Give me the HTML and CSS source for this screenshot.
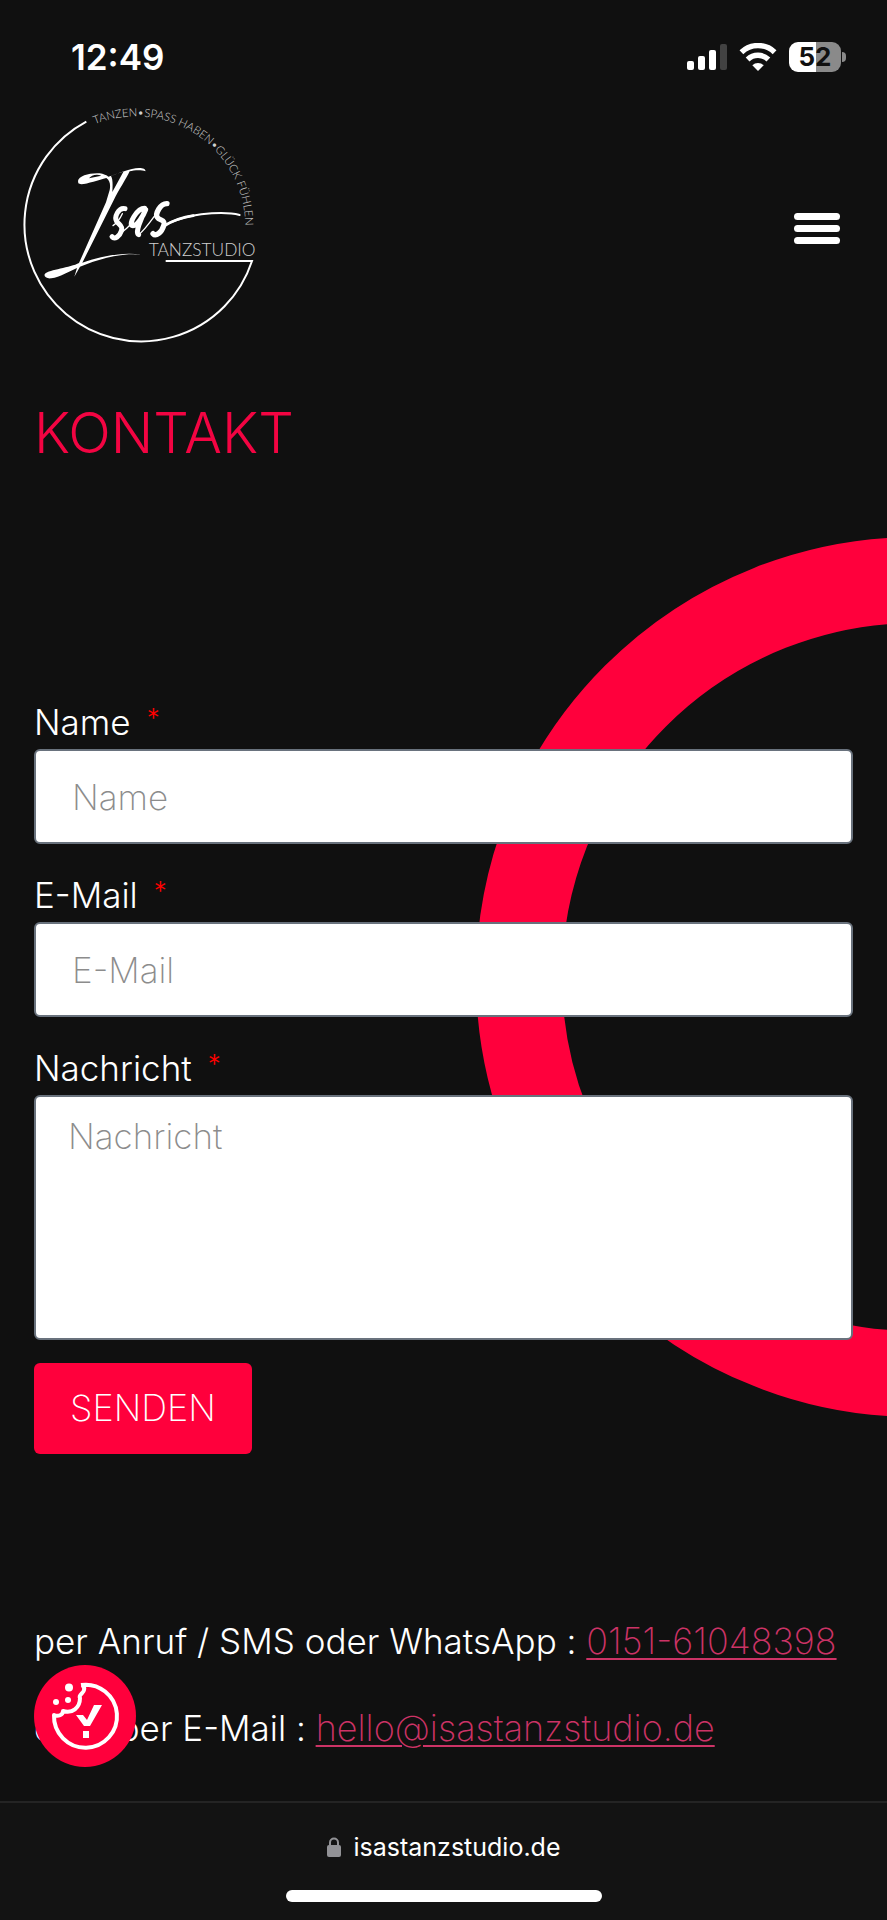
FILE: index.html
```html
<!DOCTYPE html>
<html lang="de">
<head>
<meta charset="utf-8">
<meta name="viewport" content="width=device-width, initial-scale=1">
<title>Kontakt – Isas Tanzstudio</title>
<link rel="stylesheet" href="styles.css">
</head>
<body>
<div class="status-bar">
  <span class="clock">12:49</span>
  <div class="status-icons">
    <svg width="40" height="28" viewBox="0 0 40 28" fill="#fff" aria-hidden="true">
      <rect x="0" y="18" width="7" height="9" rx="2"/>
      <rect x="11" y="13" width="7" height="14" rx="2"/>
      <rect x="22" y="7" width="7" height="20" rx="2"/>
      <rect x="33" y="1" width="7" height="26" rx="2" fill="#424242"/>
    </svg>
    <svg width="38" height="28" viewBox="0 0 38 28" aria-hidden="true">
      <g fill="none" stroke="#fff" stroke-width="5.4">
        <path d="M2.4 9.2A24 24 0 0 1 35.6 9.2"/>
        <path d="M8.6 16.5A15 15 0 0 1 29.4 16.5"/>
      </g>
      <path d="M19 28L13.3 22.2A8.4 8.4 0 0 1 24.7 22.2Z" fill="#fff"/>
    </svg>
    <div class="battery">
      <span class="battery-level">52</span>
      <span class="battery-cap"></span>
    </div>
  </div>
</div>

<header class="site-header">
  <a class="logo" href="#" aria-label="Isas Tanzstudio">
    <svg viewBox="0 0 840 810" fill="none" stroke="#fff" stroke-linecap="round" stroke-linejoin="round">
      <path d="M259 95A350 350 0 1 0 756 513H497" stroke-width="6" stroke-linecap="butt" stroke-linejoin="miter"/>
      <path id="arc" d="M284 103A329 329 0 0 1 716 521" stroke="none"/>
      <text class="logo-claim" stroke="none"><textPath href="#arc">TANZEN•SPASS HABEN•GLÜCK FÜHLEN</textPath></text>
      <text class="logo-name" x="446" y="499" stroke="none">TANZSTUDIO</text>
      <g fill="#fff" stroke="none">
        <path d="M234 273C236 257 270 248 299 250C310 252 321 256 325 260C355 251 391 235 417 234C432 234 438 239 436 244C426 239 402 240 389 244C380 265 355 301 341 331L247 518C300 500 370 484 423 494C373 487 299 505 240 530L223 560L231 534C206 545 180 561 154 565C137 567 130 557 135 551C148 539 211 533 237 519L318 337L329 300C332 284 330 272 319 264C293 270 245 289 235 280ZM371 244L333 258C339 268 338 286 337 306ZM267 265L304 257C288 251 273 257 267 265Z" fill-rule="evenodd"/>
      </g>
      <g stroke-width="11">
        <path d="M375 356C355 352 342 381 350 394C357 405 370 407 364 423C359 439 344 450 336 440" stroke-width="15"/>
        <path d="M365 427C385 414 398 397 405 379" stroke-width="4"/>
        <path d="M434 355C411 355 384 403 397 407C412 410 432 373 437 359C423 384 404 431 416 434" stroke-width="15"/>
        <path d="M416 434C433 421 452 394 465 376M339 407C349 400 361 384 367 371" stroke-width="4"/>
        <path d="M501 341C481 340 464 373 472 382C479 393 498 388 491 407C485 427 468 441 459 431" stroke-width="16"/>
        <path d="M492 407C523 390 557 379 604 373C648 368 695 369 719 375" stroke-width="6"/>
      </g>
      <path d="M492 408C520 391 545 382 580 377" stroke-width="8"/>
    </svg>
  </a>
  <button class="menu-button" type="button" aria-label="Menü"><span></span><span></span><span></span></button>
</header>

<main class="content">
  <svg class="ring" viewBox="0 0 880 880" aria-hidden="true"><circle cx="440" cy="440" r="397"/></svg>
  <h1>KONTAKT</h1>
  <form class="contact-form">
    <label for="name">Name <span class="required">*</span></label>
    <input id="name" type="text" placeholder="Name" required>
    <label for="email">E-Mail <span class="required">*</span></label>
    <input id="email" type="email" placeholder="E-Mail" required>
    <label for="message">Nachricht <span class="required">*</span></label>
    <textarea id="message" placeholder="Nachricht" required></textarea>
    <button class="submit" type="submit">SENDEN</button>
  </form>
  <div class="direct">
    <p>per Anruf / SMS oder WhatsApp : <a href="tel:015161048398">0151-61048398</a></p>
    <p>oder per E-Mail : <a href="mailto:hello@isastanzstudio.de">hello@isastanzstudio.de</a></p>
  </div>
</main>

<button class="cookie-button" type="button" aria-label="Cookie-Einstellungen">
  <svg viewBox="0 0 102 102" fill="none" stroke="#fff" stroke-width="4">
    <path d="M47 20A31.500 31.500 0 1 1 20 50C24 52 29 50 29 46C38 49 46 43 46 33C44 30 50 28 50 25Q51 22 48 20" stroke-linejoin="round"/>
    <g fill="#fff" stroke="none">
      <circle cx="35" cy="22.500" r="4"/><circle cx="22" cy="37" r="3"/><circle cx="34" cy="35" r="3"/>
      <path d="M42 50H49L53 55L60 40H68L56 61H50Z"/>
      <rect x="49" y="66" width="6" height="7"/>
    </g>
  </svg>
</button>

<footer class="browser-bar">
  <div class="address">
    <svg width="14" height="20" viewBox="0 0 14 20" aria-hidden="true"><rect y="8" width="14" height="12" rx="2" fill="#929296"/><path d="M3 9V5.500a4 4 0 0 1 8 0V9" fill="none" stroke="#929296" stroke-width="2"/></svg>
    <span>isastanzstudio.de</span>
  </div>
  <div class="home-indicator"></div>
</footer>
</body>
</html>
```
FILE: styles.css
```css
* {
  box-sizing: border-box;
}

body {
  margin: 0;
  min-height: 100vh;
  display: flex;
  flex-direction: column;
  position: relative;
  background: #101010;
  color: #fff;
  font-family: Inter, "Liberation Sans", sans-serif;
  font-size: 35px;
  font-weight: 300;
  line-height: 44px;
}

button {
  border: 0;
  cursor: pointer;
}

.status-bar {
  display: flex;
  justify-content: space-between;
  align-items: center;
  height: 98px;
  padding: 15px 41px 0 71px;
}

.clock {
  font-size: 35px;
  font-weight: 600;
}

.status-icons {
  display: flex;
  align-items: center;
  gap: 12px;
}

.battery {
  position: relative;
  width: 52px;
  height: 30px;
  margin-right: 5px;
  border-radius: 9px;
  background: linear-gradient(90deg, #fff 52%, #8a8a8a 52%);
  color: #101010;
  font-size: 26px;
  font-weight: 700;
  line-height: 30px;
  text-align: center;
}

.battery-cap {
  position: absolute;
  top: 10px;
  right: -5px;
  width: 4px;
  height: 10px;
  border-radius: 0 5px 5px 0;
  background: #8a8a8a;
}

.site-header {
  display: flex;
  justify-content: space-between;
  align-items: center;
  height: 262px;
  padding-right: 47px;
}

.logo svg {
  display: block;
  width: 280px;
  height: 270px;
  margin-top: -8px;
}

.logo-claim,
.logo-name {
  fill: #d0d0d0;
  font-family: Lato, sans-serif;
  font-weight: 300;
}

.logo-claim {
  font-size: 34px;
}

.logo-name {
  font-size: 52px;
}

.menu-button {
  display: flex;
  flex-direction: column;
  gap: 5px;
  padding: 0 0 2px;
  background: none;
}

.menu-button span {
  width: 46px;
  height: 7px;
  border-radius: 4px;
  background: #fff;
}

.content {
  flex: 1;
  position: relative;
  overflow: hidden;
  padding: 41px 34px 0;
}

.ring {
  position: absolute;
  top: 177px;
  left: calc(100% - 411px);
  width: 880px;
  height: 880px;
  fill: none;
  stroke: #ff003c;
  stroke-width: 86;
}

h1 {
  margin: 0;
  color: #f30442;
  font-size: 56px;
  font-weight: 300;
  line-height: 64px;
}

.contact-form {
  position: relative;
  display: flex;
  flex-direction: column;
  align-items: stretch;
  margin-top: 235px;
}

label {
  display: flex;
  gap: 16px;
  margin-bottom: 5px;
}

.required {
  color: #f00;
  font-size: 26px;
  line-height: 36px;
}

input,
textarea {
  width: 100%;
  border: 2px solid #69727d;
  border-radius: 6px;
  background: #fff;
  color: #222;
  font: inherit;
}

input {
  height: 95px;
  margin-bottom: 29px;
  padding: 0 36px;
}

textarea {
  display: block;
  height: 245px;
  padding: 17px 32px;
  resize: none;
}

::placeholder {
  color: #8c8c8c;
  font-weight: 200;
  opacity: 1;
}

.submit {
  align-self: flex-start;
  height: 91px;
  margin-top: 23px;
  padding: 0 36px 2px;
  border-radius: 6px;
  background: #ff003c;
  color: #fff;
  font: inherit;
  font-size: 36px;
  font-weight: 200;
}

.direct {
  position: relative;
  margin-top: 165px;
}

.direct p {
  margin: 0 0 43px;
}

.direct a {
  color: #cc3366;
  font-size: 36px;
  font-weight: 200;
  line-height: 1;
  text-decoration-thickness: 2px;
  text-underline-offset: 4px;
}

.cookie-button {
  position: absolute;
  left: 34px;
  bottom: 153px;
  width: 102px;
  height: 102px;
  padding: 0;
  border-radius: 50%;
  background: #ff003c;
}

.cookie-button svg {
  display: block;
}

.browser-bar {
  display: flex;
  flex-direction: column;
  align-items: center;
  justify-content: space-between;
  height: 119px;
  padding: 22px 0 18px;
  border-top: 2px solid #242424;
  background: #131313;
}

.address {
  display: flex;
  align-items: center;
  gap: 13px;
  font-size: 25px;
  font-weight: 400;
}

.home-indicator {
  width: 316px;
  height: 12px;
  border-radius: 6px;
  background: #fff;
}
```
